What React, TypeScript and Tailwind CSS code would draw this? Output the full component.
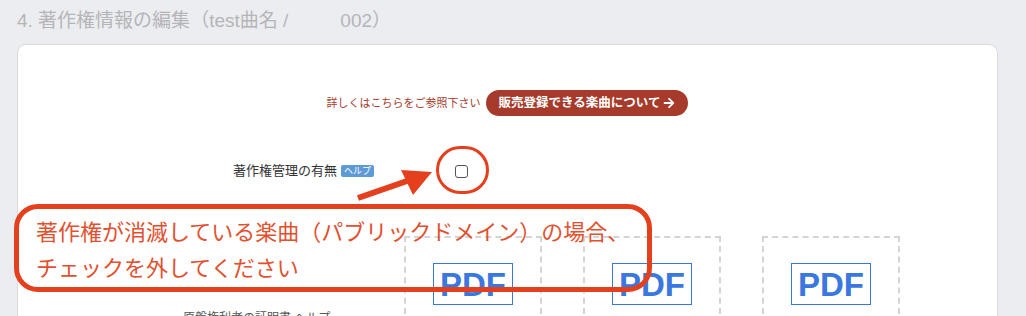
import { FaArrowRight } from "react-icons/fa";

const jp = "font-['Liberation_Sans','Noto_Sans_CJK_JP',sans-serif]";

function PdfSlot() {
  return (
    <div className="flex h-[150px] w-[138px] shrink-0 justify-center border-2 border-dashed border-[#d4d4d4] pt-[25px]">
      <div className="flex h-[42px] w-[80px] items-center justify-center border border-[#3a77de] font-['Liberation_Sans',sans-serif] text-[33px] font-bold leading-none text-[#3a77de]">
        PDF
      </div>
    </div>
  );
}

export default function App() {
  return (
    <div className={`relative h-[316px] w-[1026px] overflow-hidden bg-[#ecedf1] ${jp}`}>
      {/* page heading */}
      <div className="flex h-[44px] items-center whitespace-pre pb-[2px] pl-[17px] text-[19px] text-[#b5b5b8]">
        4. 著作権情報の編集（test曲名 /<span className="inline-block w-[52px]" />002）
      </div>

      {/* card */}
      <div className="ml-[17px] h-[300px] w-[981px] rounded-[9px] border border-[#dadada] bg-white">
        <div className="flex items-center justify-center gap-[5px] pt-[45px]">
          <span className="text-[11px] text-[#a63d2d]">詳しくはこちらをご参照下さい</span>
          <button className="flex h-[26px] items-center gap-[3px] rounded-full bg-[#a63b2b] px-[13px] text-[12.5px] font-bold text-white">
            販売登録できる楽曲について
            <FaArrowRight className="h-[12px] w-[12px]" />
          </button>
        </div>

        <div className="mt-[45px] flex h-[20px] items-center">
          <div className="flex w-[356px] items-center justify-end gap-[4px]">
            <span className="text-[13px] text-[#333]">著作権管理の有無</span>
            <span className="rounded-[2px] bg-[#5e9ad6] px-[3px] text-[9px] leading-[12px] text-white">ヘルプ</span>
          </div>
          <span className="ml-[81px] h-[13px] w-[13px] rounded-[3px] border border-[#555]" />
        </div>

        <div className="mt-[55px] flex">
          <div className="flex w-[386px] items-center pl-[165px] pt-[14px] text-[12px] text-[#555]">原盤権利者の証明書 ヘルプ</div>
          <div className="flex gap-[41px]">
            <PdfSlot />
            <PdfSlot />
            <PdfSlot />
          </div>
        </div>
      </div>

      {/* annotations */}
      <div className="absolute left-[436px] top-[146px] h-[48px] w-[53px] rounded-full border-[3px] border-[#e4401e]" />
      <svg className="absolute left-[350px] top-[160px]" width="90" height="45" viewBox="350 160 90 45">
        <line x1="358" y1="198" x2="410" y2="180" stroke="#e4401e" strokeWidth="6" />
        <polygon points="432,172 401,170 413,195" fill="#e4401e" />
      </svg>
      <div className="absolute left-[14px] top-[204px] h-[88px] w-[638px] rounded-[24px] border-[5px] border-[#e4401e] pl-[17px] pt-[6px] text-[22px] leading-[36px] text-[#e2512f]">
        <div>著作権が消滅している楽曲（パブリックドメイン）の場合、</div>
        <div>チェックを外してください</div>
      </div>
    </div>
  );
}
